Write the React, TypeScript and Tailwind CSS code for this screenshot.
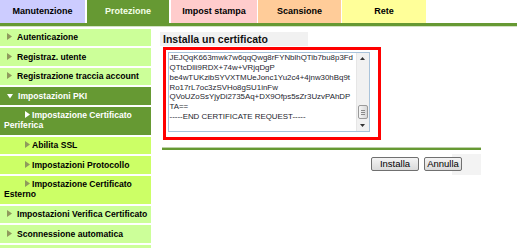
import type { ReactNode } from 'react'

const tabs = [
  { label: 'Manutenzione', cls: 'w-[85px] bg-[#ccccff] text-black' },
  { label: 'Protezione', cls: 'ml-[2px] w-[82px] bg-[#669933] text-[#f4ffe8]' },
  { label: 'Impost stampa', cls: 'ml-[2px] w-[86px] bg-[#ffcccc] text-black' },
  { label: 'Scansione', cls: 'ml-[1px] w-[83px] bg-[#ffcc99] text-black' },
  { label: 'Rete', cls: 'ml-[1px] w-[84px] bg-[#ffff99] text-black' },
]

type Item = {
  label: ReactNode
  sub?: boolean
  dark?: boolean
  open?: boolean
  tall?: boolean
}

const menu: Item[] = [
  { label: 'Autenticazione' },
  { label: 'Registraz. utente' },
  { label: 'Registrazione traccia account' },
  { label: 'Impostazioni PKI', dark: true, open: true },
  {
    label: (
      <>
        Impostazione Certificato
        <br />
        Periferica
      </>
    ),
    sub: true,
    dark: true,
    tall: true,
  },
  { label: 'Abilita SSL', sub: true },
  { label: 'Impostazioni Protocollo', sub: true },
  {
    label: (
      <>
        Impostazione Certificato
        <br />
        Esterno
      </>
    ),
    sub: true,
    tall: true,
  },
  { label: 'Impostazioni Verifica Certificato' },
  { label: 'Sconnessione automatica' },
  { label: '' },
]

const cert = [
  'JEJQqK663mwk7w6qqQwg8rFYNblhQTib7bu8p3Fd',
  'QTtcDlli9RDX+74w+VRjqDgP',
  'be4wTUKzibSYVXTMUeJonc1Yu2c4+4jnw30hBq9t',
  'Ro17rL7oc3zSVHo8gSU1inFw',
  'QVoUZoSsYjyDi2735Aq+DX9Ofps5sZr3UzvPAhDP',
  'TA==',
  '-----END CERTIFICATE REQUEST-----',
]

function Arrow({ open, color }: { open?: boolean; color: string }) {
  if (open) {
    return (
      <svg width="6" height="6" viewBox="0 0 6 6" className="inline-block align-[0px]">
        <path d="M0 1 L6 1 L3 5.5 Z" fill={color} />
      </svg>
    )
  }
  return (
    <svg width="5" height="7" viewBox="0 0 5 7" className="inline-block align-[0px]">
      <path d="M0 0 L5 3.5 L0 7 Z" fill={color} />
    </svg>
  )
}

function MenuRow({ item }: { item: Item }) {
  const bg = item.dark ? 'bg-[#669933] text-white' : item.sub ? 'bg-[#ccff66] text-black' : 'bg-[#ccff99] text-black'
  const arrowColor = item.dark ? '#ffffff' : '#8f9a5c'
  return (
    <div
      className={`${bg} ${item.tall ? 'h-[28px] pt-[3px]' : 'h-[17.5px] flex items-center'} pl-[4px] text-[8.6px] leading-[10px] font-bold whitespace-nowrap`}
    >
      {item.label !== '' && (
        <div>
          <span className={item.sub ? 'inline-block w-[21px]' : 'inline-block w-[3px]'} />
          <Arrow open={item.open} color={arrowColor} />
          <span className={item.sub ? 'ml-[2px]' : 'ml-[5px]'}>{item.label}</span>
        </div>
      )}
    </div>
  )
}

function Scrollbar() {
  return (
    <div className="w-[13px] flex flex-col bg-[#f1f1f1] border-l border-[#e6e6e6]">
      <div className="h-[10px] flex items-center justify-center">
        <svg width="5" height="3" viewBox="0 0 5 3">
          <path d="M0 3 L2.5 0 L5 3 Z" fill="#333" />
        </svg>
      </div>
      <div className="flex-1">
        <div className="mt-[42px] mx-[1px] h-[14px] rounded-[2px] border border-[#9a9a9a] bg-gradient-to-r from-[#f6f6f6] to-[#d8d8d8] flex flex-col items-center justify-center gap-[1px]">
          <div className="w-[4px] h-[1px] bg-[#8a8a8a]" />
          <div className="w-[4px] h-[1px] bg-[#8a8a8a]" />
          <div className="w-[4px] h-[1px] bg-[#8a8a8a]" />
        </div>
      </div>
      <div className="h-[10px] flex items-center justify-center">
        <svg width="5" height="3" viewBox="0 0 5 3">
          <path d="M0 0 L5 0 L2.5 3 Z" fill="#333" />
        </svg>
      </div>
    </div>
  )
}

export default function App() {
  return (
    <div className="w-[517px] h-[248px] overflow-hidden bg-white font-['Liberation_Sans',Arial,sans-serif]">
      {/* tabs */}
      <div className="flex h-[23px]">
        {tabs.map((t) => (
          <div key={t.label} className={`${t.cls} flex items-center justify-center text-[9px] font-bold`}>
            {t.label}
          </div>
        ))}
      </div>
      <div className="h-[3px] bg-[#669933]" />
      <div className="h-[1px] bg-[#d3e2c4]" />

      <div className="flex mt-[1px]">
        {/* sidebar */}
        <div className="w-[151px] shrink-0 flex flex-col gap-[2px] pt-[0.5px]">
          {menu.map((m, i) => (
            <MenuRow key={i} item={m} />
          ))}
        </div>

        {/* main */}
        <div className="pl-[9px] pt-[4px]">
          <div className="w-[148px] h-[14px] bg-[#f1f1f1] pl-[3px] text-[10.5px] leading-[14px] font-bold text-[#111]">
            Installa un certificato
          </div>
          <div className="ml-[3px] mt-[1px] w-[218px] h-[93px] border-[3px] border-[#ff0000] pl-[1.5px] pt-[2.3px]">
            <div className="w-[202px] h-[79.5px] border border-[#a9c3da] bg-white flex">
              <div className="flex-1 pl-[1px] text-[7.9px] leading-[9.8px] text-[#1e1e2e] whitespace-pre overflow-hidden">
                {cert.map((l) => (
                  <div key={l}>{l}</div>
                ))}
              </div>
              <Scrollbar />
            </div>
          </div>

          <div className="ml-[2px] mt-[7px] w-[319px]">
            <div className="h-[1px] bg-[#bdd1a8]" />
            <div className="h-[2px] bg-[#669933]" />
          </div>

          <div className="ml-[2px] mt-[4px] w-[319px] h-[21px] pt-[3px] pr-[19px] flex justify-end gap-[5px] bg-[linear-gradient(to_right,transparent_290px,#f3f3f3_290px)]">
            <button className="w-[48px] h-[14px] border border-[#707070] rounded-[2px] bg-gradient-to-b from-[#f4f4f4] to-[#dadada] text-[9.5px] leading-[12px] text-black">
              Installa
            </button>
            <button className="w-[38px] h-[14px] border border-[#707070] rounded-[2px] bg-gradient-to-b from-[#f4f4f4] to-[#dadada] text-[9.5px] leading-[12px] text-black">
              Annulla
            </button>
          </div>
        </div>
      </div>
    </div>
  )
}
